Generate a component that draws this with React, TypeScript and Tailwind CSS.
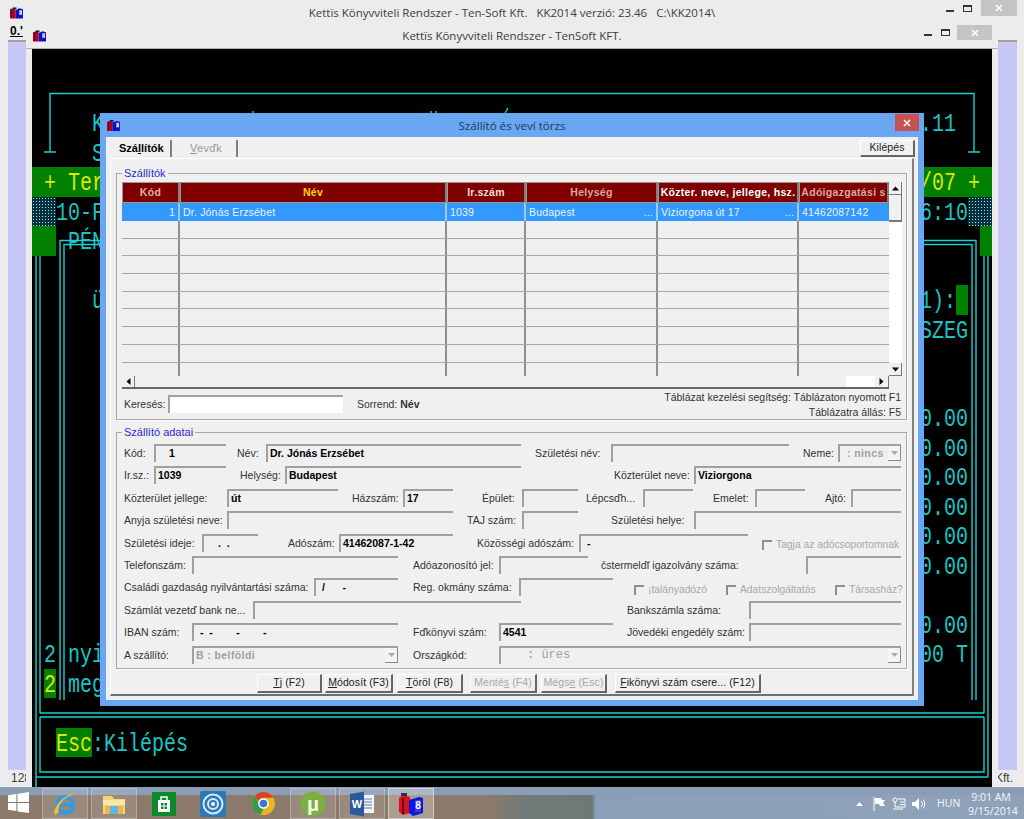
import type { ReactNode } from "react";

// window icon: red and blue books
function BooksIcon({ className }: { className: string }) {
  return (
    <svg viewBox="0 0 14 12" className={className}>
      <path d="M0 2l3-1 3 1v10H0z" fill="#b00020" />
      <path d="M1 2h1v9H1z" fill="#500010" />
      <path d="M6 3l4-2 4 1v10H6z" fill="#1010c0" />
      <path d="M10 3h3v5h-3z" fill="#c8c8f0" />
      <path d="M3 0h4v2H3z" fill="#202040" />
    </svg>
  );
}

function Close({ className }: { className: string }) {
  return (
    <div className={`flex items-center justify-center ${className}`}>
      <svg viewBox="0 0 8 8" className="w-[8px] h-[8px]">
        <path d="M1 1l6 6M7 1L1 7" stroke="#fff" strokeWidth="1.6" />
      </svg>
    </div>
  );
}

function WinButtons({ closeClass }: { closeClass: string }) {
  return (
    <div className="flex justify-end items-start h-full">
      <div className="w-[8px] h-[2px] bg-[#333] mt-[10px]" />
      <div className="w-[9px] h-[7px] border border-t-2 border-[#333] ml-[9px] mt-[5px]" />
      <Close className={closeClass} />
    </div>
  );
}

function Cell({ className, children }: { className: string; children: ReactNode }) {
  return (
    <div className={`whitespace-pre ${className}`}>
      <span className="inline-block scale-y-125 translate-y-[2px]">{children}</span>
    </div>
  );
}

const dither = "bg-[#06303c] bg-[radial-gradient(#8fe8e8_0.8px,transparent_1px)] bg-[length:3px_3px]";

function Console() {
  return (
    <div className="relative w-[960px] h-[738px] bg-black text-[#1cc4c4] text-[20px] leading-[29.52px] font-['Liberation_Mono',monospace] grid grid-cols-[repeat(80,12px)] grid-rows-[repeat(25,29.52px)]">
      <Cell className="col-start-1 col-span-80 row-start-5 bg-[#008000]"> </Cell>
      <Cell className="col-start-6 row-start-3">K</Cell>
      <Cell className="col-start-75 row-start-3">.11</Cell>
      <Cell className="col-start-6 row-start-4">S</Cell>
      <Cell className="col-start-2 row-start-5 text-[#dce800]">+ Ter</Cell>
      <Cell className="col-start-75 row-start-5 text-[#dce800]">/07</Cell>
      <Cell className="col-start-79 row-start-5 text-[#dce800]">+</Cell>
      <Cell className={`col-start-1 col-span-2 row-start-6 ${dither}`}> </Cell>
      <Cell className="col-start-3 row-start-6">10-F</Cell>
      <Cell className="col-start-75 row-start-6">6:10</Cell>
      <Cell className={`col-start-79 col-span-2 row-start-6 ${dither}`}> </Cell>
      <Cell className="col-start-1 col-span-2 row-start-7 bg-[#008000]"> </Cell>
      <Cell className="col-start-4 row-start-7">PÉN</Cell>
      <Cell className="col-start-80 row-start-7 bg-[#008000]"> </Cell>
      <Cell className="col-start-6 row-start-9">ü</Cell>
      <Cell className="col-start-75 row-start-9">1):</Cell>
      <Cell className="col-start-78 row-start-9 bg-[#008000]"> </Cell>
      <Cell className="col-start-75 row-start-10">SZEG</Cell>
      <Cell className="col-start-75 row-start-13">0.00</Cell>
      <Cell className="col-start-75 row-start-14">0.00</Cell>
      <Cell className="col-start-75 row-start-15">0.00</Cell>
      <Cell className="col-start-75 row-start-16">0.00</Cell>
      <Cell className="col-start-75 row-start-17">0.00</Cell>
      <Cell className="col-start-75 row-start-18">0.00</Cell>
      <Cell className="col-start-75 row-start-20">0.00</Cell>
      <Cell className="col-start-75 row-start-21">00 T</Cell>
      <Cell className="col-start-2 row-start-21">2 nyi</Cell>
      <Cell className="col-start-2 row-start-22 bg-[#008000] text-[#dce800]">2</Cell>
      <Cell className="col-start-4 row-start-22">meg</Cell>
      <Cell className="col-start-3 col-span-3 row-start-24 bg-[#008000] text-[#dce800]">Esc</Cell>
      <Cell className="col-start-6 row-start-24">:Kilépés</Cell>

      {/* box drawing of the text screen, plus the accents that stick out above the dialog */}
      <svg viewBox="0 0 960 738" className="absolute inset-0 w-[960px] h-[738px] pointer-events-none" fill="none" stroke="#19cfcf" strokeWidth="1.4">
        <path d="M12 103h12M18 103V44.5h924V103M936 103h12" />
        <path d="M4 207v571M8 207v457M8 664h944M8 668h944M8 668v55h944v-55M4 728h952M952 207v457M956 207v521" />
        <path d="M28 651V191.500h916V651M32 651V195.500h908V651" />
        <path d="M221 62v2M399 62v2M404 62v2M473 64l3-5" />
      </svg>
    </div>
  );
}

function GroupBox({ title, className, children }: { title: string; className: string; children: ReactNode }) {
  return (
    <div className={`relative border border-[#a8a8a8] shadow-[1px_1px_0_#fff] ${className}`}>
      <div className="absolute -top-[8px] left-[5px] bg-[#f0f0f0] px-[2px] leading-[14px] text-[11px] text-[#2a2ad0]">{title}</div>
      {children}
    </div>
  );
}

function Arrow({ d }: { d: string }) {
  return (
    <svg viewBox="0 0 7 7" className="w-[7px] h-[7px]">
      <path d={d} fill="#000" />
    </svg>
  );
}

function ScrollButton({ d, className }: { d: string; className: string }) {
  return (
    <div className={`flex items-center justify-center bg-[#f0f0f0] border-r border-b border-[#777] ${className}`}>
      <Arrow d={d} />
    </div>
  );
}

const colClasses = ["w-[58px]", "w-[267px]", "w-[79px]", "w-[132px]", "w-[141px]", "w-[90px]"];

const headers = [
  { label: "Kód", color: "text-[#e0b0a8]" },
  { label: "Név", color: "text-[#f8d800]" },
  { label: "Ir.szám", color: "text-[#f0dcd8]" },
  { label: "Helység", color: "text-[#d8a8a0]" },
  { label: "Közter. neve, jellege, hsz.", color: "text-white" },
  { label: "Adóigazgatási s", color: "text-[#d8a8a0]" },
];

function SupplierTable() {
  return (
    <div className="w-[780px]">
      <div className="flex h-[194px]">
        <div className="w-[767px] overflow-hidden">
          <div className="flex h-[21px]">
            {headers.map((h, i) => (
              <div
                key={h.label}
                className={`${colClasses[i]} shrink-0 h-[21px] bg-[#800000] border border-[#999] border-r-2 border-r-[#808080] font-bold tracking-[0.3px] text-center whitespace-nowrap overflow-hidden leading-[18px] ${h.color}`}
              >
                {h.label}
              </div>
            ))}
          </div>
          <div className="flex h-[18px] bg-[#3399ff] text-[#e8f4ff] leading-[18px] tracking-[0.2px]">
            <div className={`${colClasses[0]} text-right pr-[3px] border-r-2 border-[#a0c8f0]`}>1</div>
            <div className={`${colClasses[1]} pl-[3px] border-r-2 border-[#a0c8f0]`}>Dr. Jónás Erzsébet</div>
            <div className={`${colClasses[2]} pl-[3px] border-r-2 border-[#a0c8f0]`}>1039</div>
            <div className={`${colClasses[3]} pl-[3px] pr-[3px] border-r-2 border-[#a0c8f0] flex justify-between`}>
              <span>Budapest</span>
              <span>...</span>
            </div>
            <div className={`${colClasses[4]} pl-[3px] pr-[3px] border-r-2 border-[#a0c8f0] flex justify-between`}>
              <span>Viziorgona út 17</span>
              <span>...</span>
            </div>
            <div className={`${colClasses[5]} pl-[3px]`}>41462087142</div>
          </div>
          {[0, 1, 2, 3, 4, 5, 6, 7, 8].map((r) => (
            <div key={r} className="flex h-[17.7px] border-b border-[#a8a8a8]">
              {colClasses.map((c, i) => (
                <div key={c} className={`${c} ${i < 5 ? "border-r-2 border-[#909090]" : ""}`} />
              ))}
            </div>
          ))}
        </div>
        <div className="w-[13px] flex flex-col bg-white">
          <ScrollButton d="M3.500 1.500L7 5.500H0z" className="h-[13px]" />
          <div className="h-[27px] bg-[#f0f0f0] border-r border-b-2 border-[#777]" />
          <div className="flex-1" />
          <ScrollButton d="M0 1.500h7L3.500 5.500z" className="h-[13px]" />
        </div>
      </div>
      <div className="flex h-[13px]">
        <div className="w-[767px] flex border-b-2 border-[#666]">
          <ScrollButton d="M1.500 3.500L5.500 0v7z" className="w-[13px] !border-b-0" />
          <div className="w-[711px] bg-[#f0f0f0]" />
          <div className="w-[29px] bg-white" />
          <ScrollButton d="M1.500 0l4 3.500-4 3.500z" className="flex-1 !border-b-0" />
        </div>
        <div className="w-[13px] bg-[#f0f0f0]" />
      </div>
    </div>
  );
}

function Label({ className, children }: { className: string; children: ReactNode }) {
  return <div className={`shrink-0 whitespace-nowrap leading-[18px] overflow-visible ${className}`}>{children}</div>;
}

function Field({ className, children }: { className: string; children?: ReactNode }) {
  return (
    <div className={`shrink-0 h-[18px] bg-[#efefef] border-t-2 border-l-2 border-[#a0a0a0] pl-[2px] font-bold text-black leading-[15px] whitespace-pre overflow-hidden ${className}`}>
      {children}
    </div>
  );
}

function Select({ className, textClass, children }: { className: string; textClass: string; children: ReactNode }) {
  return (
    <div className={`shrink-0 h-[18px] flex bg-[#efefef] border-t-2 border-l-2 border-[#a0a0a0] ${className}`}>
      <div className={`flex-1 whitespace-pre leading-[15px] font-bold text-[#a0a0a0] ${textClass}`}>{children}</div>
      <div className="w-[13px] h-[15px] flex items-center justify-center border-r border-b border-[#888] bg-[#f4f4f4]">
        <svg viewBox="0 0 7 4" className="w-[7px] h-[4px]">
          <path d="M0 0h7L3.500 4z" fill="#aaa" />
        </svg>
      </div>
    </div>
  );
}

function Check({ className, children }: { className: string; children: ReactNode }) {
  return (
    <div className={`shrink-0 flex items-center gap-[4px] text-[#a8a8a8] whitespace-nowrap leading-[18px] text-[10.3px] ${className}`}>
      <div className="w-[10px] h-[10px] bg-[#f0f0f0] border-t-2 border-l-2 border-[#909090] shrink-0" />
      {children}
    </div>
  );
}

function Row({ children }: { children: ReactNode }) {
  return <div className="flex h-[22.4px]">{children}</div>;
}

function SupplierForm() {
  return (
    <div className="pt-[11px] pl-[7px]">
      <Row>
        <Label className="w-[30px]">Kód:</Label>
        <Field className="w-[72px] pl-[13px]">1</Field>
        <Label className="ml-[11px] w-[29px]">Név:</Label>
        <Field className="w-[255px]">Dr. Jónás Erzsébet</Field>
        <Label className="ml-[14px] w-[76px]">Születési név:</Label>
        <Field className="w-[178px]" />
        <Label className="ml-[14px] w-[35px]">Neme:</Label>
        <Select className="w-[63px]" textClass="pl-[7px] tracking-[0.4px]">: nincs</Select>
      </Row>
      <Row>
        <Label className="w-[30px]">Ir.sz.:</Label>
        <Field className="w-[72px]">1039</Field>
        <Label className="ml-[14px] w-[45px]">Helység:</Label>
        <Field className="w-[236px]">Budapest</Field>
        <Label className="ml-[93px] w-[80px]">Közterület neve:</Label>
        <Field className="w-[207px]">Viziorgona</Field>
      </Row>
      <Row>
        <Label className="w-[103px]">Közterület jellege:</Label>
        <Field className="w-[111px]">út</Field>
        <Label className="ml-[14px] w-[51px]">Házszám:</Label>
        <Field className="w-[50px]">17</Field>
        <Label className="ml-[29px] w-[40px]">Épület:</Label>
        <Field className="w-[56px]" />
        <Label className="ml-[8px] w-[57px]">Lépcsďh...</Label>
        <Field className="w-[50px]" />
        <Label className="ml-[20px] w-[42px]">Emelet:</Label>
        <Field className="w-[50px]" />
        <Label className="ml-[20px] w-[26px]">Ajtó:</Label>
        <Field className="w-[50px]" />
      </Row>
      <Row>
        <Label className="w-[103px]">Anyja születési neve:</Label>
        <Field className="w-[226px]" />
        <Label className="ml-[14px] w-[55px]">TAJ szám:</Label>
        <Field className="w-[56px]" />
        <Label className="ml-[33px] w-[83px]">Születési helye:</Label>
        <Field className="w-[207px]" />
      </Row>
      <Row>
        <Label className="w-[78px]">Születési ideje:</Label>
        <Field className="w-[56px] pl-[14px]">{".  ."}</Field>
        <Label className="ml-[30px] w-[51px]">Adószám:</Label>
        <Field className="w-[114px]">41462087-1-42</Field>
        <Label className="ml-[24px] w-[102px]">Közösségi adószám:</Label>
        <Field className="w-[169px] pl-[6px]">-</Field>
        <Check className="ml-[14px]">Tagja az adócsoportomnak</Check>
      </Row>
      <Row>
        <Label className="w-[68px]">Telefonszám:</Label>
        <Field className="w-[206px]" />
        <Label className="ml-[15px] w-[86px]">Adóazonosító jel:</Label>
        <Field className="w-[89px]" />
        <Label className="ml-[13px] w-[205px]">čstermeldĭ igazolvány száma:</Label>
        <Field className="w-[95px]" />
      </Row>
      <Row>
        <Label className="w-[190px]">Családi gazdaság nyilvántartási száma:</Label>
        <Field className="w-[84px] pl-[6px]">{"/      -"}</Field>
        <Label className="ml-[15px] w-[106px]">Reg. okmány száma:</Label>
        <Field className="w-[94px]" />
        <Check className="ml-[21px] w-[92px]">¡talányadózó</Check>
        <Check className="w-[109px]">Adatszolgáltatás</Check>
        <Check className="">Társasház?</Check>
      </Row>
      <Row>
        <Label className="w-[129px]">Számlát vezetď bank ne...</Label>
        <Field className="w-[268px]" />
        <Label className="ml-[106px] w-[122px]">Bankszámla száma:</Label>
        <Field className="w-[152px]" />
      </Row>
      <Row>
        <Label className="w-[68px]">IBAN szám:</Label>
        <Field className="w-[206px] pl-[6px]">{"-  -        -        -"}</Field>
        <Label className="ml-[15px] w-[86px]">Fďkönyvi szám:</Label>
        <Field className="w-[114px]">4541</Field>
        <Label className="ml-[14px] w-[122px]">Jövedéki engedély szám:</Label>
        <Field className="w-[152px]" />
      </Row>
      <Row>
        <Label className="w-[68px]">A szállító:</Label>
        <Select className="w-[206px]" textClass="pl-[2px] tracking-[0.4px]">B : belföldi</Select>
        <Label className="ml-[15px] w-[86px]">Országkód:</Label>
        <Select className="w-[402px]" textClass="pl-[26px] font-['Liberation_Mono',monospace] font-normal text-[#888] text-[12px]">: üres</Select>
      </Row>
    </div>
  );
}

function FormButton({ className, disabled, children }: { className: string; disabled?: boolean; children: ReactNode }) {
  return (
    <div className={`h-[19px] bg-[#f0f0f0] border-t border-l border-white border-r-2 border-b-2 border-r-[#666] border-b-[#666] flex items-center justify-center whitespace-pre tracking-[0.1px] shrink-0 ${disabled ? "text-[#a8a8a8]" : "text-[#222]"} ${className}`}>
      {children}
    </div>
  );
}

function SupplierDialog() {
  return (
    <div className="absolute left-[100px] top-[113px] w-[824px] h-[593px] bg-[#69a7f3] flex flex-col font-['Liberation_Sans',Arial,sans-serif] text-[10.5px] text-[#333]">
      <div className="h-[24px] shrink-0 grid grid-cols-[1fr_auto_1fr] items-start">
        <BooksIcon className="w-[13px] h-[11px] ml-[7px] mt-[7px]" />
        <div className="text-[11.6px] leading-[24px] mt-[1px] text-[#1c3a60] font-['Open_Sans',sans-serif]">Szállító és veví törzs</div>
        <div className="flex justify-end">
          <Close className="w-[24px] h-[17px] bg-[#c75050] mr-[5px] mt-[1px]" />
        </div>
      </div>
      <div className="h-[563px] mx-[6px] bg-[#f0f0f0] px-[4px] flex flex-col">
        <div className="h-[21px] shrink-0 flex pt-[3px]">
          <div className="w-[62px] border-r-2 border-[#808080] h-[17px] pl-[9px] font-bold text-[11px] text-black leading-[17px]">
            Szá<span className="underline">l</span>lítók
          </div>
          <div className="w-[66px] border-r-2 border-[#808080] h-[17px] pl-[18px] text-[11px] text-[#999] leading-[17px] tracking-[0.3px]">
            <span className="underline">V</span>evďk
          </div>
          <FormButton className="ml-auto w-[55px] !h-[17px] mr-[-1px]">Kilépés</FormButton>
        </div>
        <div className="h-[538px] shrink-0 border-t border-l border-white border-r-2 border-b-2 border-r-[#808080] border-b-[#707070] px-[5px] pt-[14px]">
          <GroupBox title="Szállítók" className="h-[247px] pl-[5px] pt-[8px]">
            <SupplierTable />
            <div className="flex h-[30px] mt-[1px] pr-[5px]">
              <div className="flex items-start pt-[5px] pl-[2px]">
                <Label className="w-[44px]">Keresés:</Label>
                <div className="w-[175px] h-[18px] bg-white border-t-2 border-l-2 border-[#a0a0a0]" />
                <Label className="ml-[14px]">
                  Sorrend: <b>Név</b>
                </Label>
              </div>
              <div className="ml-auto text-right leading-[15px]">
                <div>Táblázat kezelési segítség: Táblázaton nyomott F1</div>
                <div>Táblázatra állás: F5</div>
              </div>
            </div>
          </GroupBox>
          <GroupBox title="Szállító adatai" className="h-[237px] mt-[12px]">
            <SupplierForm />
          </GroupBox>
          <div className="flex mt-[5px] pl-[141px]">
            <FormButton className="w-[65px]"><span className="underline">T</span>j (F2)</FormButton>
            <FormButton className="w-[68px] ml-[3px]"><span className="underline">M</span>ódosít (F3)</FormButton>
            <FormButton className="w-[66px] ml-[4px]"><span className="underline">T</span>öröl (F8)</FormButton>
            <FormButton className="w-[67px] ml-[7px]" disabled>Menté<span className="underline">s</span> (F4)</FormButton>
            <FormButton className="w-[66px] ml-[4px]" disabled>Mégs<span className="underline">e</span> (Esc)</FormButton>
            <FormButton className="w-[146px] ml-[8px]"><span className="underline">F</span>ikönyvi szám csere... (F12)</FormButton>
          </div>
        </div>
      </div>
    </div>
  );
}

function TaskButton({ className, children }: { className: string; children: ReactNode }) {
  return <div className={`h-[31px] flex items-center justify-center shrink-0 ${className}`}>{children}</div>;
}

const framed = "border border-[#ffffff40] bg-[#ffffff1f]";

function Taskbar() {
  return (
    <div className="h-[32px] shrink-0 flex items-end text-[#f4f6f8] font-['Open_Sans',sans-serif] bg-[linear-gradient(180deg,#8b9db3_0,#8b9db3_8px,transparent_8px),linear-gradient(90deg,#8b7a6b_0%,#8b7a6b_48%,#707a78_51%,#6e7876_57.8%,#8ba0b8_58.2%,#8ea3ba_100%)]">
      <svg viewBox="0 0 20 20" className="w-[21px] h-[21px] ml-[8px] mb-[6px]">
        <path d="M0 3l8-1v7.500H0zM9 2l11-2v9.500H9zM0 10.500h8V18l-8-1zM9 10.500h11V20L9 18.500z" fill="#fff" />
      </svg>
      <TaskButton className={`w-[46px] ml-[13px] ${framed}`}>
        <svg viewBox="0 0 26 26" className="w-[26px] h-[26px]">
          <circle cx="13" cy="14" r="8" fill="none" stroke="#2f9be8" strokeWidth="4" />
          <path d="M7 14h13" stroke="#2f9be8" strokeWidth="3" />
          <path d="M3 24C0 18 10 4 24 2c-4 2-7 3-10 5-5 3-9 11-7 14z" fill="#f0c030" />
        </svg>
      </TaskButton>
      <TaskButton className={`w-[46px] ml-[3px] ${framed}`}>
        <svg viewBox="0 0 26 24" className="w-[26px] h-[24px]">
          <path d="M2 4h9l2 3h11v15H2z" fill="#f2d27a" />
          <path d="M2 8h22v5H2z" fill="#f9e7a8" />
          <path d="M9 14h8v8H9z" fill="#5fb4e8" />
          <path d="M4 14h5v8H4zM17 14h5v8h-5z" fill="#e8b850" />
        </svg>
      </TaskButton>
      <TaskButton className="w-[24px] ml-[15px]">
        <svg viewBox="0 0 24 24" className="w-[24px] h-[24px]">
          <path d="M0 0h24v24H0z" fill="#0b8a2c" />
          <path d="M6 8h12v12H6z" fill="#fff" />
          <path d="M9 8V5h6v3" fill="none" stroke="#fff" strokeWidth="1.500" />
          <path d="M9 11h2.500v2.500H9zM12.500 11H15v2.500h-2.500zM9 14.500h2.500V17H9zM12.500 14.500H15V17h-2.500z" fill="#0b8a2c" />
        </svg>
      </TaskButton>
      <TaskButton className="w-[26px] ml-[24px]">
        <svg viewBox="0 0 26 26" className="w-[26px] h-[26px]">
          <rect x="0" y="0" width="26" height="26" rx="2" fill="#2a79b8" />
          <circle cx="13" cy="13" r="9.500" fill="none" stroke="#d8e8f4" strokeWidth="2" />
          <circle cx="13" cy="13" r="5" fill="none" stroke="#d8e8f4" strokeWidth="2" />
          <circle cx="13" cy="13" r="2" fill="#fff" />
        </svg>
      </TaskButton>
      <TaskButton className="w-[23px] ml-[26px]">
        <svg viewBox="0 0 24 24" className="w-[23px] h-[23px]">
          <circle cx="12" cy="12" r="12" fill="#e8b420" />
          <path d="M12 0a12 12 0 0 1 10.400 6H12a6 6 0 0 0-5.500 3.500L3 4a12 12 0 0 1 9-4z" fill="#d84030" />
          <path d="M3 4l5.500 10a6 6 0 0 0 3.500 4l-3 5.700A12 12 0 0 1 3 4z" fill="#3a9a48" />
          <circle cx="12" cy="12" r="5.500" fill="#fff" />
          <circle cx="12" cy="12" r="4" fill="#3a78d8" />
        </svg>
      </TaskButton>
      <TaskButton className={`w-[46px] ml-[15px] ${framed}`}>
        <svg viewBox="0 0 26 26" className="w-[26px] h-[26px]">
          <circle cx="13" cy="13" r="12.500" fill="#7ab040" />
          <text x="13" y="20" textAnchor="middle" fontSize="21" fontWeight="700" fill="#f4f8ea" fontFamily="Liberation Sans">µ</text>
        </svg>
      </TaskButton>
      <TaskButton className={`w-[46px] ml-[3px] ${framed}`}>
        <svg viewBox="0 0 26 26" className="w-[26px] h-[26px]">
          <path d="M12 4h13v18H12z" fill="#f2f4f8" />
          <path d="M14 8h9M14 11h9M14 14h9M14 17h9" stroke="#5a7fb0" />
          <path d="M1 3l14-2.500v25L1 23z" fill="#2a5a9c" />
          <text x="8" y="17" textAnchor="middle" fontSize="11" fontWeight="700" fill="#fff" fontFamily="Liberation Sans">W</text>
        </svg>
      </TaskButton>
      <TaskButton className="w-[46px] ml-[3px] border border-[#ffffff70] bg-[#ffffff45]">
        <svg viewBox="0 0 26 24" className="w-[26px] h-[24px]">
          <path d="M1 6l4-3 7 2v16l-7 2-4-3z" fill="#d81020" />
          <path d="M4 6h2v16H4z" fill="#700010" />
          <path d="M11 8l10-3 4 1v15l-10 3-4-3z" fill="#1018d8" />
          <path d="M17 8h6v12h-6z" fill="#3038e8" />
          <text x="20" y="17" textAnchor="middle" fontSize="10" fontWeight="700" fill="#fff" fontFamily="Liberation Sans">8</text>
          <path d="M3 1h6v3H3z" fill="#303040" />
        </svg>
      </TaskButton>
      <div className="ml-auto flex items-center h-[32px] pt-[1px]">
        <svg viewBox="0 0 7 4" className="w-[7px] h-[4px]">
          <path d="M3.500 0L7 4H0z" fill="#fff" />
        </svg>
        <svg viewBox="0 0 13 14" className="w-[13px] h-[14px] ml-[10px]">
          <path d="M1 0v14" stroke="#fff" />
          <path d="M2 1h6l1 2h3l-2 3 2 3H7L6 7H2z" fill="#fff" />
        </svg>
        <svg viewBox="0 0 14 14" className="w-[14px] h-[14px] ml-[6px]">
          <circle cx="3" cy="3" r="2" fill="none" stroke="#fff" />
          <path d="M3 5v5h5M6 2h7v8H8M8 5h4M8 7.500h4" fill="none" stroke="#fff" />
          <path d="M1 12h10" stroke="#fff" />
        </svg>
        <svg viewBox="0 0 14 12" className="w-[14px] h-[12px] ml-[6px]">
          <path d="M0 4h3l4-4v12L3 8H0z" fill="#fff" />
          <path d="M9 3a4 4 0 0 1 0 6M11 1.500a6.500 6.500 0 0 1 0 9" fill="none" stroke="#fff" />
        </svg>
        <div className="text-[10.5px] ml-[11px] w-[24px]">HUN</div>
        <div className="text-[10.5px] leading-[14px] text-center ml-[7px] mr-[10px] w-[46px]">
          <div>9:01 AM</div>
          <div>9/15/2014</div>
        </div>
      </div>
    </div>
  );
}

export default function App() {
  return (
    <div className="relative w-[1024px] h-[819px] overflow-hidden flex flex-col bg-[#ececec] font-['Open_Sans',sans-serif] text-[#3c3c3c]">
      {/* main frame title */}
      <div className="h-[24px] shrink-0 grid grid-cols-[1fr_auto_1fr] items-start">
        <BooksIcon className="w-[13px] h-[12px] ml-[10px] mt-[7px]" />
        <div className="text-[11.5px] leading-[26px] whitespace-pre">{"Kettïs Könyvviteli Rendszer - Ten-Soft Kft.   KK2014 verzió: 23.46   C:\\KK2014\\"}</div>
        <WinButtons closeClass="w-[36px] h-[16px] bg-[#c4c4c4] ml-[9px] mr-[7px]" />
      </div>
      <div className="flex-1 flex min-h-0">
        <div className="w-[8px]" />
        <div className="w-[18px] flex flex-col bg-[#c8c8f8]">
          <div className="h-[18px] bg-[#ececec] border-b-2 border-[#a0a0a0] overflow-hidden pl-[2px] font-['Liberation_Sans',Arial,sans-serif] text-[12px] font-bold text-black leading-[15px] underline">0.'</div>
          <div className="flex-1" />
          <div className="h-[17px] bg-[#ececec] pl-[3px] text-[12px] leading-[17px] font-['Liberation_Sans',Arial,sans-serif] overflow-hidden whitespace-nowrap">128</div>
        </div>
        <div className="w-[972px] flex flex-col">
          <div className="h-[25px] shrink-0 border-b border-[#b0b0b0] grid grid-cols-[1fr_auto_1fr] items-start">
            <BooksIcon className="w-[13px] h-[12px] ml-[7px] mt-[6px]" />
            <div className="text-[11.5px] leading-[24px]">Kettïs Könyvviteli Rendszer - TenSoft KFT.</div>
            <WinButtons closeClass="w-[35px] h-[15px] bg-[#c4c4c4] ml-[7px] mr-[6px] mt-[1px]" />
          </div>
          <div className="flex-1 pl-[6px] pr-[6px] min-h-0">
            <Console />
          </div>
        </div>
        <div className="w-[19px] flex flex-col bg-[#c8c8f8]">
          <div className="h-[18px] bg-[#ececec] border-b-2 border-[#a0a0a0]" />
          <div className="flex-1" />
          <div className="h-[17px] bg-[#ececec] flex justify-end pr-[4px] overflow-hidden text-[12px] leading-[17px] font-['Liberation_Sans',Arial,sans-serif] whitespace-nowrap">Kft.</div>
        </div>
        <div className="w-[7px]" />
      </div>
      <Taskbar />
      <SupplierDialog />
    </div>
  );
}
